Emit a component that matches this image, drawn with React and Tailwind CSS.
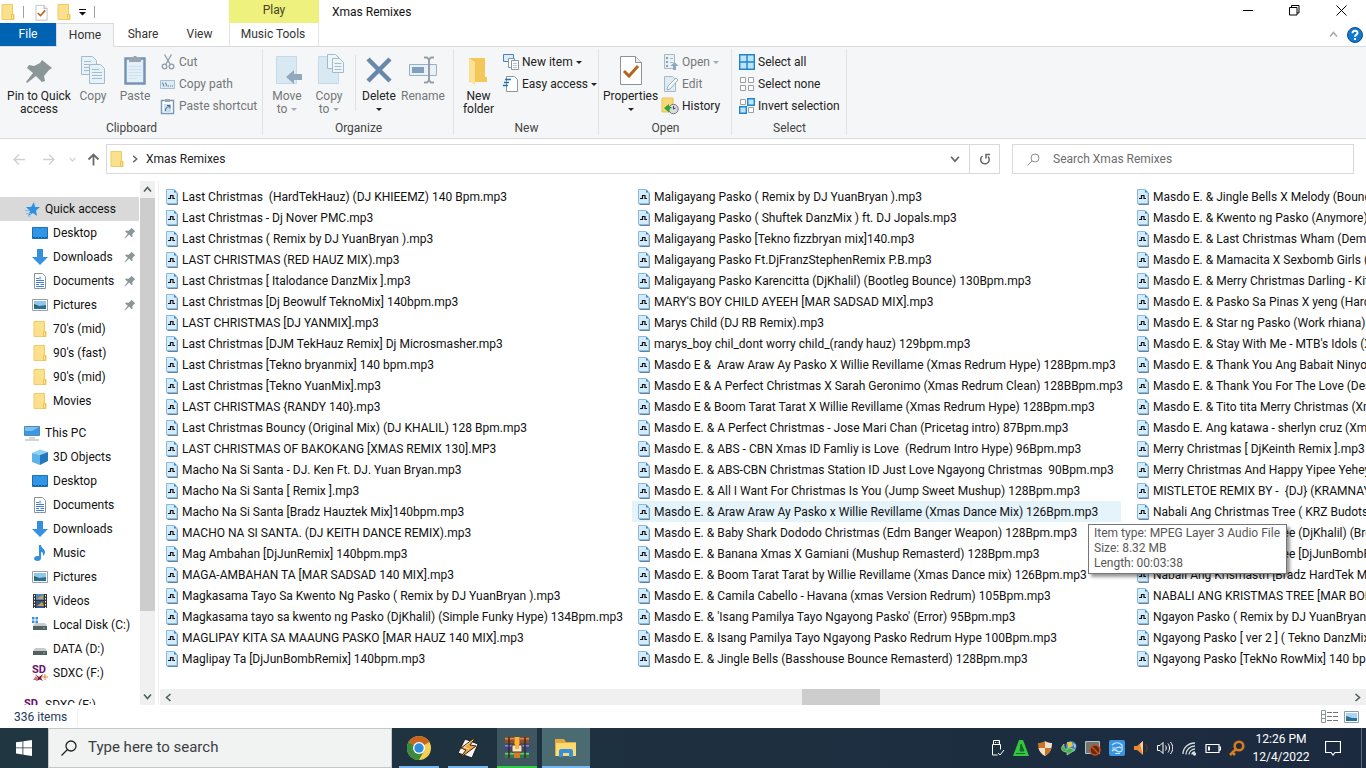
import React from 'react';

const COLUMN_ONE = [
  'Last Christmas  (HardTekHauz) (DJ KHIEEMZ) 140 Bpm.mp3',
  'Last Christmas - Dj Nover PMC.mp3',
  'Last Christmas ( Remix by DJ YuanBryan ).mp3',
  'LAST CHRISTMAS (RED HAUZ MIX).mp3',
  'Last Christmas [ Italodance DanzMix ].mp3',
  'Last Christmas [Dj Beowulf TeknoMix] 140bpm.mp3',
  'LAST CHRISTMAS [DJ YANMIX].mp3',
  'Last Christmas [DJM TekHauz Remix] Dj Microsmasher.mp3',
  'Last Christmas [Tekno bryanmix] 140 bpm.mp3',
  'Last Christmas [Tekno YuanMix].mp3',
  'LAST CHRISTMAS {RANDY 140}.mp3',
  'Last Christmas Bouncy (Original Mix) (DJ KHALIL) 128 Bpm.mp3',
  'LAST CHRISTMAS OF BAKOKANG [XMAS REMIX 130].MP3',
  'Macho Na Si Santa - DJ. Ken Ft. DJ. Yuan Bryan.mp3',
  'Macho Na Si Santa [ Remix ].mp3',
  'Macho Na Si Santa [Bradz Hauztek Mix]140bpm.mp3',
  'MACHO NA SI SANTA. (DJ KEITH DANCE REMIX).mp3',
  'Mag Ambahan [DjJunRemix] 140bpm.mp3',
  'MAGA-AMBAHAN TA [MAR SADSAD 140 MIX].mp3',
  'Magkasama Tayo Sa Kwento Ng Pasko ( Remix by DJ YuanBryan ).mp3',
  'Magkasama tayo sa kwento ng Pasko (DjKhalil) (Simple Funky Hype) 134Bpm.mp3',
  'MAGLIPAY KITA SA MAAUNG PASKO [MAR HAUZ 140 MIX].mp3',
  'Maglipay Ta [DjJunBombRemix] 140bpm.mp3',
];

const COLUMN_TWO = [
  'Maligayang Pasko ( Remix by DJ YuanBryan ).mp3',
  'Maligayang Pasko ( Shuftek DanzMix ) ft. DJ Jopals.mp3',
  'Maligayang Pasko [Tekno fizzbryan mix]140.mp3',
  'Maligayang Pasko Ft.DjFranzStephenRemix P.B.mp3',
  'Maligayang Pasko Karencitta (DjKhalil) (Bootleg Bounce) 130Bpm.mp3',
  "MARY'S BOY CHILD AYEEH [MAR SADSAD MIX].mp3",
  'Marys Child (DJ RB Remix).mp3',
  'marys_boy chil_dont worry child_(randy hauz) 129bpm.mp3',
  'Masdo E &  Araw Araw Ay Pasko X Willie Revillame (Xmas Redrum Hype) 128Bpm.mp3',
  'Masdo E & A Perfect Christmas X Sarah Geronimo (Xmas Redrum Clean) 128BBpm.mp3',
  'Masdo E & Boom Tarat Tarat X Willie Revillame (Xmas Redrum Hype) 128Bpm.mp3',
  'Masdo E. & A Perfect Christmas - Jose Mari Chan (Pricetag intro) 87Bpm.mp3',
  'Masdo E. & ABS - CBN Xmas ID Famliy is Love  (Redrum Intro Hype) 96Bpm.mp3',
  'Masdo E. & ABS-CBN Christmas Station ID Just Love Ngayong Christmas  90Bpm.mp3',
  'Masdo E. & All I Want For Christmas Is You (Jump Sweet Mushup) 128Bpm.mp3',
  'Masdo E. & Araw Araw Ay Pasko x Willie Revillame (Xmas Dance Mix) 126Bpm.mp3',
  'Masdo E. & Baby Shark Dododo Christmas (Edm Banger Weapon) 128Bpm.mp3',
  'Masdo E. & Banana Xmas X Gamiani (Mushup Remasterd) 128Bpm.mp3',
  'Masdo E. & Boom Tarat Tarat by Willie Revillame (Xmas Dance mix) 126Bpm.mp3',
  'Masdo E. & Camila Cabello - Havana (xmas Version Redrum) 105Bpm.mp3',
  "Masdo E. & 'Isang Pamilya Tayo Ngayong Pasko' (Error) 95Bpm.mp3",
  'Masdo E. & Isang Pamilya Tayo Ngayong Pasko Redrum Hype 100Bpm.mp3',
  'Masdo E. & Jingle Bells (Basshouse Bounce Remasterd) 128Bpm.mp3',
];

const COLUMN_THREE = [
  'Masdo E. & Jingle Bells X Melody (Bounce Mix) 128Bpm.mp3',
  'Masdo E. & Kwento ng Pasko (Anymore) 128Bpm.mp3',
  'Masdo E. & Last Christmas Wham (Dem Remix) 128Bpm.mp3',
  'Masdo E. & Mamacita X Sexbomb Girls (Mix) 128Bpm.mp3',
  'Masdo E. & Merry Christmas Darling - Kit (Mix) 128Bpm.mp3',
  'Masdo E. & Pasko Sa Pinas X yeng (Hard Mix) 128Bpm.mp3',
  'Masdo E. & Star ng Pasko (Work rhiana) 128Bpm.mp3',
  "Masdo E. & Stay With Me - MTB's Idols (Xmas) 128Bpm.mp3",
  'Masdo E. & Thank You Ang Babait Ninyo 128Bpm.mp3',
  'Masdo E. & Thank You For The Love (Desk Mix) 128Bpm.mp3',
  'Masdo E. & Tito tita Merry Christmas (Xmas Mix) 128Bpm.mp3',
  'Masdo E. Ang katawa - sherlyn cruz (Xmas Mix) 128Bpm.mp3',
  'Merry Christmas [ DjKeinth Remix ].mp3',
  'Merry Christmas And Happy Yipee Yehey 128Bpm.mp3',
  'MISTLETOE REMIX BY -  {DJ} (KRAMNAYR).mp3',
  'Nabali Ang Christmas Tree ( KRZ Budots Remix ).mp3',
  'Nabali Ang Christmas Tree (DjKhalil) (Break Mix).mp3',
  'Nabali Ang Christmas Tree [DjJunBombRemix].mp3',
  'Nabali Ang Krismastri [Bradz HardTek Mix].mp3',
  'NABALI ANG KRISTMAS TREE [MAR BOMB MIX].mp3',
  'Ngayon Pasko ( Remix by DJ YuanBryan ).mp3',
  'Ngayong Pasko [ ver 2 ] ( Tekno DanzMix ).mp3',
  'Ngayong Pasko [TekNo RowMix] 140 bpm.mp3',
];

const HOVERED = COLUMN_TWO[15];

/* ---------- small shared icons ---------- */

function Folder() {
  return (
    <svg className="h-4 w-4 shrink-0" viewBox="0 0 16 16">
      <path d="M2 .5h10.500v10h1.500v5H2z" fill="#fbe08d" stroke="#f0cb63" />
      <path d="M11.500 10.500h2v5h-2z" fill="#ffe9a2" stroke="#eec04c" />
    </svg>
  );
}

function Caret({ muted }) {
  return (
    <svg className="h-[3px] w-1.5 shrink-0" viewBox="0 0 6 3">
      <path d="M0 0h6L3 3z" fill={muted ? '#a5a9ad' : '#222'} />
    </svg>
  );
}

function PinMark() {
  return (
    <svg className="h-3 w-3 shrink-0" viewBox="0 0 32 32">
      <path d="M20 2l10 9-3 2-5 6 1 6-3 2-6-7L3 30l-2-1 9-11-7-6 3-3 6 1 6-5z" fill="#8c9699" />
    </svg>
  );
}

function Chevron({ dir, color = '#505f5f', size = 'h-[9px] w-[9px]' }) {
  const d = {
    up: 'M1 6.500l3.500-4 3.500 4',
    down: 'M1 2.500l3.500 4 3.500-4',
    left: 'M6.500 1l-4 3.500 4 3.500',
    right: 'M2.500 1l4 3.500-4 3.500',
  }[dir];
  return (
    <svg className={`${size} shrink-0`} viewBox="0 0 9 9">
      <path d={d} fill="none" stroke={color} strokeWidth="1.600" />
    </svg>
  );
}

function CheckSheet({ size }) {
  return (
    <svg className={`${size} shrink-0`} viewBox="0 0 32 32">
      <path d="M5.500 2.500h15l6 6v22h-21z" fill="#fff" stroke="#8e9296" />
      <path d="M20.500 2.500v6h6" fill="#e9ebec" stroke="#8e9296" />
      <path d="M9 17l5 5 9-10" fill="none" stroke="#b8651b" strokeWidth="3" />
    </svg>
  );
}

function Mp3Icon() {
  return (
    <svg className="h-4 w-3 shrink-0" viewBox="0 0 12 16">
      <path d="M1.500 15.500h10V4" fill="none" stroke="#6b7f93" />
      <path d="M.5.500h7.500l3 3v11H.5z" fill="#d3ebfa" stroke="#86bbe0" />
      <path d="M8 .5l3 3H8z" fill="#2f86cf" />
      <path d="M2 9.500h2.500v-3h2.500v3h2" fill="none" stroke="#111" strokeWidth="1.200" />
    </svg>
  );
}

/* ---------- ribbon icons ---------- */

const page = (x, y, w, h) => `M${x} ${y}h${w - 4}l4 4v${h - 4}h-${w}z`;

function RibbonIcon({ name }) {
  const art = {
    pin: (
      <path d="M19 6l10 8-3 2-5 6 1 5-3 1-6-6-9 7-1-1 7-9-6-5 2-3 5 1 6-3z" fill="#8b9696" />
    ),
    copy: (
      <g fill="#e6f1f8" stroke="#a3bccd">
        <path d={page(4.500, 2.500, 15, 18)} />
        <path d="M7 7.500h7M7 10.500h10M7 13.500h5M7 16.500h5" />
        <path d={page(12.500, 10.500, 15, 19)} />
        <path d="M15 15.500h7M15 18.500h10M15 21.500h10M15 24.500h10" />
      </g>
    ),
    paste: (
      <g>
        <path d="M6.500 4.500h19v25h-19z" fill="#e3f0fa" stroke="#7695b4" strokeWidth="2.500" />
        <path d="M9.500 12.500h13M9.500 15.500h13M9.500 18.500h13M9.500 21.500h13M9.500 24.500h8" stroke="#cfe1ee" />
        <path d="M10 4h3l2-2h2l2 2h3v4H10z" fill="#9aa5ac" />
      </g>
    ),
    moveTo: (
      <g>
        <path d="M5.500 2.500h20v27h-20z" fill="#d9e9f4" stroke="#c5d9e7" />
        <path d="M15 23l8-7v4h8v6h-8v4z" fill="#91a9ba" />
      </g>
    ),
    copyTo: (
      <g>
        <path d="M5.500 2.500h20v27h-20z" fill="#d9e9f4" stroke="#c5d9e7" />
        <g fill="#eef5f9" stroke="#a3bccd">
          <path d={page(14.500, 0.500, 12, 14)} />
          <path d={page(19.500, 4.500, 11, 14)} />
          <path d="M21.500 9.500h7M21.500 12.500h7M21.500 15.500h7" />
        </g>
      </g>
    ),
    del: <path d="M5 5l22 22M27 5L5 27" stroke="#6787ab" strokeWidth="4.500" />,
    rename: (
      <g>
        <path d="M2.500 10.500h27v11h-27z" fill="#e9f1f7" stroke="#93b2c9" />
        <path d="M5 13h12v6H5z" fill="#7f9fbb" />
        <path d="M17 3.500h3l2 2 2-2h3M22 5v22M17 28.500h3l2-2 2 2h3" fill="none" stroke="#95a0a8" strokeWidth="2" />
      </g>
    ),
    folder: (
      <g>
        <path d="M6 4h16v19h2v5H6z" fill="#f4c75b" />
        <path d="M6 4l6 4v23l-6-4z" fill="#fde194" />
      </g>
    ),
  }[name];
  return (
    <svg className="h-8 w-8" viewBox="0 0 32 32">
      {art}
    </svg>
  );
}

function SmallIcon({ name }) {
  const art = {
    cut: (
      <g fill="none" stroke="#8d9da8" strokeWidth="1.300">
        <path d="M4.500.5l5.500 9.500M11.500.5L6 10" />
        <circle cx="4.500" cy="12.500" r="2.300" />
        <circle cx="11.500" cy="12.500" r="2.300" />
      </g>
    ),
    copyPath: (
      <g>
        <path d="M.5 4.500h14v8H.5z" fill="#dcebf5" stroke="#a7bfd0" />
        <path d="M2.500 6.500l1.500 4M5.500 6.500l1.500 4M8 10h1M10 10h1M12 10h1" stroke="#5c7387" fill="none" />
      </g>
    ),
    shortcut: (
      <g>
        <path d="M1.500 2.500h12v13h-12z" fill="#fff" stroke="#7c9cb8" strokeWidth="1.500" />
        <path d="M5 1h5v3H5z" fill="#9aa5ac" />
        <path d="M4 6h7v8H4z" fill="#c8dded" />
        <path d="M5.500 13c0-3 1-4 4-4.500M7 7.500h3v3" stroke="#41668a" fill="none" />
      </g>
    ),
    newItem: (
      <g>
        <path d="M.5.500h10v7H.5z" fill="#dcebf5" stroke="#4b82b3" />
        <path d="M5.500 4.500h6v9h-6z" fill="#fff" stroke="#8b979f" />
        <path d="M8.500 6.500h7v9h-7z" fill="#fff" stroke="#8b979f" />
        <path d="M10 9.500h4M10 11.500h4M10 13.500h4" stroke="#b4c5d1" />
      </g>
    ),
    easy: (
      <g>
        <path d="M3.500.500h8l3 3v12h-11z" fill="#fff" stroke="#8b979f" />
        <path d="M2 3.500h6M1 6.500h5M0 9.500h5" stroke="#1d73b8" strokeWidth="1.400" />
      </g>
    ),
    open: (
      <g>
        <path d="M1.500.5h10v14h-10z" fill="#e9f1f6" stroke="#a6b9c6" />
        <path d="M3 3h2v2H3zM3 7h2v2H3zM3 11h2v2H3z" fill="#859eb0" />
        <path d="M7 4.500h3M7 8.500h3" stroke="#a6b9c6" />
        <path d="M11.500 8l4 4h-2.500v4h-3v-4H7.500z" fill="#8fa7b9" />
      </g>
    ),
    edit: (
      <g>
        <path d="M1.500.5h8l3 3v12h-11z" fill="#dfebf3" stroke="#a6b9c6" />
        <path d="M4 14l1-4 8-8 2 2-8 9z" fill="#f2f7fa" stroke="#9db1bf" />
      </g>
    ),
    history: (
      <g>
        <path d="M-1 0h11v14H-1z" fill="#f8d978" stroke="#edc453" />
        <circle cx="10.500" cy="11" r="4.700" fill="#d9dde0" stroke="#6f7a80" />
        <path d="M10.500 8v3l2-1" stroke="#444" fill="none" />
        <path d="M1 10l5-4v2.500c2 0 3 1 3 2-2-1-3 0-3 4z" fill="#2fa52f" />
      </g>
    ),
    all: (
      <g fill="#bfe3fa" stroke="#1f85cf" strokeWidth="1.400">
        <path d="M.7.700h7.300v7.300H.7zM8 .700h7.300v7.300H8zM.7 8H8v7.300H.7zM8 8h7.300v7.300H8z" />
      </g>
    ),
    none: (
      <g fill="#fff" stroke="#9aa0a4">
        <path d="M1.500 1.500h5v5h-5zM9.500 1.500h5v5h-5zM1.500 9.500h5v5h-5zM9.500 9.500h5v5h-5z" />
      </g>
    ),
    invert: (
      <g>
        <path d="M1.500 1.500h5v5h-5zM9.500 9.500h5v5h-5z" fill="#fff" stroke="#9aa0a4" />
        <path d="M8.700.700h6.600v6.600H8.700zM.7 8.700h6.600v6.600H.7z" fill="#bfe3fa" stroke="#1f85cf" strokeWidth="1.400" />
      </g>
    ),
  }[name];
  return (
    <svg className="h-4 w-4 shrink-0 overflow-visible" viewBox="0 0 16 16">
      {art}
    </svg>
  );
}

/* ---------- title bar and tabs ---------- */

function TitleBar() {
  return (
    <header className="flex h-[23px]">
      <div className="flex w-[229px] items-center pt-px">
        <Folder />
        <span className="ml-[7px] h-3 w-px bg-gray-400" />
        <button className="ml-[9px]" aria-label="Properties">
          <CheckSheet size="h-[17px] w-[17px]" />
        </button>
        <button className="ml-1.5" aria-label="New folder">
          <Folder />
        </button>
        <button className="ml-[7px]" aria-label="Customize toolbar">
          <svg className="h-[7px] w-[7px]" viewBox="0 0 7 7">
            <path d="M0 0h7v1H0zM0 3h7L3.500 6.500z" fill="#111" />
          </svg>
        </button>
        <span className="ml-2 h-3 w-px bg-gray-400" />
      </div>
      <div className="w-[90px] bg-[#eff17f] text-center leading-[21px] text-[#444422]">Play</div>
      <h1 className="pl-[13px] leading-[24px]">Xmas Remixes</h1>
      <div className="ml-auto flex items-center pb-0.5">
        <button className="flex w-[45px] justify-center" aria-label="Minimize">
          <svg className="h-[11px] w-[11px]" viewBox="0 0 11 11">
            <path d="M0 5.500h10" stroke="#000" />
          </svg>
        </button>
        <button className="flex w-[46px] justify-center" aria-label="Restore">
          <svg className="h-[11px] w-[11px]" viewBox="0 0 11 11">
            <path d="M.5 2.500h7.500v7.500H.5zM2.500 2.500V.5H10v7.500H8" fill="none" stroke="#000" />
          </svg>
        </button>
        <button className="flex w-[49px] justify-center" aria-label="Close">
          <svg className="h-[11px] w-[11px]" viewBox="0 0 11 11">
            <path d="M.5.500l10 10M10.500.500l-10 10" stroke="#000" />
          </svg>
        </button>
      </div>
    </header>
  );
}

function Tabs() {
  return (
    <nav className="flex h-6 border-b border-[#dadbdc] leading-[23px] text-[#333]">
      <button className="w-14 bg-[#0063b1] text-white">File</button>
      <button className="-mb-px w-[58px] border-x border-t border-[#dadbdc] bg-[#f5f6f7]">Home</button>
      <button className="w-[58px]">Share</button>
      <button className="w-[57px] pr-0.5">View</button>
      <button className="w-[90px] border-x border-[#e4e4e4] pr-0.5">Music Tools</button>
      <div className="ml-auto flex items-center gap-[9px] pr-[3px]">
        <button aria-label="Minimize the ribbon">
          <Chevron dir="up" color="#a9a9a9" />
        </button>
        <button aria-label="Help">
          <svg className="h-4 w-4" viewBox="0 0 16 16">
            <circle cx="8" cy="8" r="7.500" fill="#1177cf" stroke="#0b4f96" />
            <path d="M5.500 6.200C5.500 3 10.500 3 10.500 6c0 1.800-2.500 1.700-2.500 3.800M8 11v2" fill="none" stroke="#fff" strokeWidth="2" />
          </svg>
        </button>
      </div>
    </nav>
  );
}

/* ---------- ribbon ---------- */

function BigButton({ icon, lines, width, muted, caret }) {
  return (
    <button className={`${width} flex shrink-0 flex-col items-center pt-[7px] leading-[13px] ${muted ? 'text-[#737779]' : 'text-[#222]'}`}>
      {icon === 'sheet' ? <CheckSheet size="h-8 w-8" /> : <RibbonIcon name={icon} />}
      <span className="mt-1 whitespace-nowrap">{lines[0]}</span>
      <span className="flex min-h-3 items-center gap-1">
        {lines[1]}
        {caret && <Caret muted={muted} />}
      </span>
    </button>
  );
}

function SmallButton({ icon, label, muted, caret }) {
  return (
    <button className={`flex h-[22px] items-center gap-[3px] whitespace-nowrap ${muted ? 'text-[#737779]' : 'text-[#222]'}`}>
      <SmallIcon name={icon} />
      {label}
      {caret && <Caret muted={muted} />}
    </button>
  );
}

function Group({ title, width, children }) {
  return (
    <section className={`${width} relative flex shrink-0 flex-col`}>
      <div className="flex h-[74px]">{children}</div>
      <h2 className="text-center leading-[15px] text-[#444]">{title}</h2>
      <span className="absolute top-[2px] right-0 h-[86px] w-px bg-[#e1e2e3]" />
    </section>
  );
}

function Ribbon() {
  return (
    <div className="flex h-[92px] border-b border-[#dadbdc] bg-[#f5f6f7]">
      <Group title="Clipboard" width="w-[263px]">
        <BigButton icon="pin" lines={['Pin to Quick', 'access']} width="w-[78px]" />
        <BigButton icon="copy" lines={['Copy']} width="w-[30px]" muted />
        <BigButton icon="paste" lines={['Paste']} width="w-[54px]" muted />
        <div className="-ml-0.5 flex flex-col pt-1">
          <SmallButton icon="cut" label="Cut" muted />
          <SmallButton icon="copyPath" label="Copy path" muted />
          <SmallButton icon="shortcut" label="Paste shortcut" muted />
        </div>
      </Group>
      <Group title="Organize" width="w-[191px]">
        <BigButton icon="moveTo" lines={['Move', 'to']} width="w-[48px]" muted caret />
        <BigButton icon="copyTo" lines={['Copy', 'to']} width="w-[36px]" muted caret />
        <span className="mt-2 ml-2 h-14 w-px bg-[#dfe0e1]" />
        <BigButton icon="del" lines={['Delete']} width="w-[46px]" caret />
        <BigButton icon="rename" lines={['Rename']} width="w-[42px]" muted />
      </Group>
      <Group title="New" width="w-[145px]">
        <BigButton icon="folder" lines={['New', 'folder']} width="w-[49px]" />
        <div className="flex flex-col pt-1">
          <SmallButton icon="newItem" label="New item" caret />
          <SmallButton icon="easy" label="Easy access" caret />
        </div>
      </Group>
      <Group title="Open" width="w-[133px]">
        <BigButton icon="sheet" lines={['Properties']} width="w-[63px]" caret />
        <div className="flex flex-col pt-1 pl-px">
          <SmallButton icon="open" label="Open" muted caret />
          <SmallButton icon="edit" label="Edit" muted />
          <SmallButton icon="history" label="History" />
        </div>
      </Group>
      <Group title="Select" width="w-[115px]">
        <div className="flex flex-col pt-1 pl-[7px]">
          <SmallButton icon="all" label="Select all" />
          <SmallButton icon="none" label="Select none" />
          <SmallButton icon="invert" label="Invert selection" />
        </div>
      </Group>
    </div>
  );
}

/* ---------- address bar ---------- */

function Arrow({ dir, color }) {
  const d = {
    left: 'M12 6.500H1M6 1.500l-5 5 5 5',
    right: 'M1 6.500h11M7 1.500l5 5-5 5',
    up: 'M6.500 12.500V1.500M1.500 6.500l5-5 5 5',
  }[dir];
  return (
    <svg className="h-[13px] w-[13px]" viewBox="0 0 13 13">
      <path d={d} fill="none" stroke={color} strokeWidth={dir === 'up' ? 1.8 : 1.3} />
    </svg>
  );
}

function AddressBar() {
  return (
    <div className="flex h-[42px] items-center pr-3 pb-0.5">
      <div className="flex w-[106px] items-center pl-[13px]">
        <button aria-label="Back"><Arrow dir="left" color="#cfcfcf" /></button>
        <button className="ml-4" aria-label="Forward"><Arrow dir="right" color="#cfcfcf" /></button>
        <button className="ml-3.5" aria-label="Recent locations">
          <Chevron dir="down" color="#cfcfcf" size="h-[7px] w-[7px]" />
        </button>
        <button className="ml-[11px]" aria-label="Up"><Arrow dir="up" color="#6a6a6a" /></button>
      </div>
      <div className="flex h-[30px] flex-1 items-center border border-[#d9d9d9] pl-0.5">
        <Folder />
        <span className="ml-1.5"><Chevron dir="right" color="#666" size="h-2 w-2" /></span>
        <a href="#folder" className="ml-[7px] text-[#222]">Xmas Remixes</a>
        <button className="mr-[9px] ml-auto" aria-label="Previous locations">
          <Chevron dir="down" color="#666" size="h-2.5 w-2.5" />
        </button>
        <button className="flex h-full w-[30px] items-center justify-center border-l border-[#d9d9d9]" aria-label="Refresh">
          <svg className="h-3 w-3" viewBox="0 0 12 12">
            <path d="M8.500 3A4.300 4.300 0 1 1 3 3.500M1 1.500h4v4" fill="none" stroke="#666" strokeWidth="1.500" transform="matrix(-1 0 0 1 12 0)" />
          </svg>
        </button>
      </div>
      <label className="ml-3 flex h-[30px] w-[342px] items-center border border-[#d9d9d9] pl-3.5">
        <svg className="h-[13px] w-[13px]" viewBox="0 0 13 13" aria-label="Search">
          <circle cx="8" cy="5" r="4" fill="none" stroke="#8b8f8b" />
          <path d="M5 8L.5 12.500" stroke="#8b8f8b" />
        </svg>
        <input type="text" aria-label="Search Xmas Remixes" placeholder="Search Xmas Remixes" className="ml-[13px] flex-1 outline-none placeholder:text-[#6d6d6d]" />
      </label>
    </div>
  );
}

/* ---------- navigation pane ---------- */

function PlaceIcon({ name }) {
  if (name === 'folder') return <Folder />;
  const art = {
    star: (
      <g>
        <path d="M10 1l1 5h5l-4 3.500 1 5.500-4-3-5 3 2-5-4-4h5z" fill="#2f8fe0" />
        <path d="M2 12.500h5M1 9.500h4M4 15h3" stroke="#7cb9ec" />
      </g>
    ),
    desktop: (
      <g>
        <path d="M.5 2.500h15v11H.5z" fill="#2f95e4" stroke="#1b6fb4" />
        <path d="M1 12.500h14" stroke="#135a98" strokeDasharray="2 1" />
      </g>
    ),
    downloads: <path d="M5 0h6v8h5l-8 8-8-8h5z" fill="#3590df" />,
    documents: (
      <g>
        <path d="M2.500.5h8l3 3v12h-11z" fill="#fff" stroke="#8a9399" />
        <path d="M4 5.500h3M4 7.500h8M4 9.500h8M4 11.500h3M8.500 11.500H12M4 13.500h8M8 3.500v3" stroke="#3e84c4" />
      </g>
    ),
    pictures: (
      <g>
        <path d="M.5 2.500h15v11H.5z" fill="#fff" stroke="#9aa2a6" />
        <path d="M2 4h12v8H2z" fill="#8fc8ee" />
        <path d="M2 8l5 1 7-1v4H2z" fill="#2a6f93" />
        <path d="M2 7l5 2H2z" fill="#2b5d4c" />
      </g>
    ),
    pc: (
      <g>
        <path d="M.5 1.500h15v9H.5z" fill="#3a97e2" stroke="#4d88b8" />
        <path d="M1 2h14L8 6H1z" fill="#7cc0f2" />
        <path d="M5 13h6M1 15h14" stroke="#a5adb2" strokeWidth="1.200" />
      </g>
    ),
    cube: (
      <g>
        <path d="M0 4l8-3.500L16 3l-8 3z" fill="#8fd2f3" />
        <path d="M0 4l8 2v10l-8-3z" fill="#5bb3e6" />
        <path d="M16 3v9l-8 4V6z" fill="#2277bd" />
      </g>
    ),
    music: (
      <path d="M7 0h2c0 3 4 4 4 7 0 2-1 3-2 4 .5-3-.5-4-2-4v6c0 2-1.500 3-3.500 3S2 15 2 13.500 4 10.500 7 11z" fill="#2f8fe0" />
    ),
    videos: (
      <g>
        <path d="M1 1h14v14H1z" fill="#333" />
        <path d="M4 1h8v6H4z" fill="#4d86bd" />
        <path d="M4 8h8v7H4z" fill="#315a8c" />
        <path d="M6 5l5-3v4H6zM5 13l5-4 2 4z" fill="#d99a3c" />
        <path d="M2.500 2v13M13.500 2v13" stroke="#fff" strokeDasharray="1.500 1.500" />
      </g>
    ),
    disk: (
      <g>
        <path d="M0 0h2.500v2.500H0zM3.500 0H6v2.500H3.500zM0 3.500h2.500V6H0zM3.500 3.500H6V6H3.500z" fill="#3590df" />
        <path d="M3 6h10l2 3H1z" fill="#c6cccc" />
        <path d="M1 9h14v4H1z" fill="#536062" />
        <path d="M11 11h2" stroke="#49e07a" />
      </g>
    ),
    data: (
      <g>
        <path d="M3 7h10l2 3H1z" fill="#c6cccc" />
        <path d="M1 10h14v4H1z" fill="#536062" />
        <path d="M11 12h2" stroke="#49e07a" />
      </g>
    ),
    sdStar: (
      <g>
        <text x="0" y="8" fontSize="11" fontWeight="700" fill="#6b0f6b">SD</text>
        <path d="M3 9l4 3 4-3-2 4 2 3-3-1.500L4 16l2-3z" fill="#7a1040" />
        <path d="M13 9v6M10 12h6" stroke="#d98a2b" />
        <path d="M1 15l3-4 2 4z" fill="#c9756a" />
      </g>
    ),
    sd: <text x="0" y="10" fontSize="11" fontWeight="700" fill="#6b0f6b">SD</text>,
  }[name];
  return (
    <svg className="h-4 w-4 shrink-0 overflow-visible" viewBox="0 0 16 16">
      {art}
    </svg>
  );
}

const QUICK = [
  ['desktop', 'Desktop', true],
  ['downloads', 'Downloads', true],
  ['documents', 'Documents', true],
  ['pictures', 'Pictures', true],
  ['folder', "70's (mid)"],
  ['folder', "90's (fast)"],
  ['folder', "90's (mid)"],
  ['folder', 'Movies'],
];

const THIS_PC = [
  ['cube', '3D Objects'],
  ['desktop', 'Desktop'],
  ['documents', 'Documents'],
  ['downloads', 'Downloads'],
  ['music', 'Music'],
  ['pictures', 'Pictures'],
  ['videos', 'Videos'],
  ['disk', 'Local Disk (C:)'],
  ['data', 'DATA (D:)'],
  ['sdStar', 'SDXC (F:)'],
];

function Place({ icon, label, pinned, root, active }) {
  return (
    <li>
      <a href="#place" className={`flex h-6 items-center gap-[5px] pr-[3px] whitespace-nowrap ${root ? 'pl-6' : 'pl-8'} ${active ? 'bg-[#d9d9d9]' : ''}`}>
        <PlaceIcon name={icon} />
        {label}
        {pinned && <span className="ml-auto"><PinMark /></span>}
      </a>
    </li>
  );
}

function Sidebar() {
  return (
    <aside className="flex w-[159px] shrink-0 border-r border-[#f0f0f0]">
      <div className="w-[139px] overflow-hidden pt-4">
        <ul>
          <Place icon="star" label="Quick access" root active />
          {QUICK.map(([icon, label, pinned], i) => (
            <Place key={i} icon={icon} label={label} pinned={pinned} />
          ))}
        </ul>
        <ul className="mt-2">
          <Place icon="pc" label="This PC" root />
          {THIS_PC.map(([icon, label], i) => (
            <Place key={i} icon={icon} label={label} />
          ))}
        </ul>
        <ul className="mt-2">
          <Place icon="sd" label="SDXC (F:)" root />
        </ul>
      </div>
      <div className="ml-px flex w-[15px] flex-col items-center bg-[#f0f0f0]">
        <span className="flex h-[17px] items-center"><Chevron dir="up" /></span>
        <span className="h-[413px] w-full bg-[#cdcdcd]" />
        <span className="mt-auto flex h-[17px] items-center"><Chevron dir="down" /></span>
      </div>
    </aside>
  );
}

/* ---------- file list ---------- */

function FileColumn({ files, width }) {
  return (
    <ul className={`${width} shrink-0 pr-2.5`}>
      {files.map((name) => (
        <li
          key={name}
          className={`flex h-[21px] items-center gap-1 pl-1.5 whitespace-pre ${name === HOVERED ? 'bg-[#e5f3fb]' : ''}`}
        >
          <Mp3Icon />
          {name}
        </li>
      ))}
    </ul>
  );
}

function FilePane() {
  return (
    <main className="relative flex min-w-0 flex-1 flex-col pl-px">
      <div className="flex flex-1 overflow-hidden pt-[5px]">
        <FileColumn files={COLUMN_ONE} width="w-[472px]" />
        <FileColumn files={COLUMN_TWO} width="w-[499px]" />
        <FileColumn files={COLUMN_THREE} width="w-[472px]" />
      </div>
      <div className="flex h-4 items-center bg-[#f0f0f0] px-1">
        <Chevron dir="left" />
        <div className="flex h-full flex-1 justify-end">
          <span className="mr-[473px] h-full w-[78px] bg-[#cdcdcd]" />
        </div>
        <Chevron dir="right" />
      </div>
      <div
        role="tooltip"
        className="absolute top-[343px] left-[929px] border border-[#767676] bg-white pt-px pr-1.5 pb-0.5 pl-[5px] leading-[15px] whitespace-nowrap text-[#575757] shadow-[3px_3px_3px_rgba(0,0,0,0.4)]"
      >
        <p>Item type: MPEG Layer 3 Audio File</p>
        <p>Size: 8.32 MB</p>
        <p>Length: 00:03:38</p>
      </div>
    </main>
  );
}

function StatusBar() {
  return (
    <footer className="flex h-[23px] items-center gap-[6px] pr-[7px] pl-3.5 text-[#1e395b]">
      <span>336 items</span>
      <span className="ml-1 h-4 w-px bg-[#f0f0f0]" />
      <button className="ml-auto" aria-label="Details view">
        <svg className="h-[13px] w-[17px]" viewBox="0 0 17 13">
          <path d="M.5.500h4v12h-4z" fill="#fff" stroke="#8c9494" />
          <path d="M1 4.500h3M1 8.500h3" stroke="#8c9494" />
          <path d="M6 2.500h5M6 6.500h5M6 10.500h5M12 2.500h5M12 6.500h5M12 10.500h5" stroke="#6d7575" />
        </svg>
      </button>
      <button aria-label="Large icons view">
        <svg className="h-3 w-[15px]" viewBox="0 0 15 12">
          <path d="M.5.500h14v11H.5z" fill="#fff" stroke="#8c9ea8" />
          <path d="M2 2h11v8H2z" fill="#a6d5f5" />
          <path d="M2 5l6 2 5 0v3H2z" fill="#2d6f95" />
        </svg>
      </button>
    </footer>
  );
}

/* ---------- taskbar ---------- */

function Chrome() {
  return (
    <svg className="h-6 w-6" viewBox="0 0 24 24">
      <circle cx="12" cy="12" r="12" fill="#f3cf56" />
      <path d="M12 12L1.600 6A12 12 0 0 1 22.400 6z" fill="#c8651f" />
      <path d="M12 12L1.600 6A12 12 0 0 0 12 24l5-9z" fill="#3c8a3e" />
      <circle cx="12" cy="12" r="6" fill="#fff" />
      <circle cx="12" cy="12" r="4.700" fill="#2f8be0" />
    </svg>
  );
}

function Winamp() {
  return (
    <svg className="h-6 w-6" viewBox="0 0 24 24">
      <path d="M9 3l13 5-6 14-14-5z" fill="#f4f4f4" stroke="#1b1b1b" />
      <path d="M20 1L5 12l5 2-6 8 16-12-6-1z" fill="#f0a545" stroke="#3a2410" />
      <path d="M17 4L8 11l5 2" fill="none" stroke="#fbdc9c" />
    </svg>
  );
}

function WinRar() {
  return (
    <svg className="h-6 w-6" viewBox="0 0 24 24">
      <path d="M0 1h24v6H0z" fill="#9c4a22" />
      <path d="M0 2h24v1.500H0z" fill="#d98a52" />
      <path d="M0 8h24v7H0z" fill="#3d4a8c" />
      <path d="M0 9h24v1.500H0z" fill="#7f8fd6" />
      <path d="M0 16h24v6H0z" fill="#2f7a4d" />
      <path d="M0 17h24v1.500H0z" fill="#6fc78e" />
      <path d="M4 1v21M20 1v21" stroke="#3b2a1c" strokeWidth="1.500" />
      <path d="M9 1h6v21H9z" fill="#d47a26" />
      <path d="M7 9h10v7H7z" fill="#efe6d2" stroke="#5c3a1a" />
      <path d="M10 1h4v12h-4z" fill="#f4b63d" />
    </svg>
  );
}

function ExplorerIcon() {
  return (
    <svg className="h-6 w-6" viewBox="0 0 24 24">
      <path d="M1 3h9l2 3h10v14H1z" fill="#e3a83e" />
      <path d="M2 7h20v13H2z" fill="#fbd973" />
      <path d="M5 21v-6c0-1 1-2 2-2h10c1 0 2 1 2 2v6h-4v-4H9v4z" fill="#3590df" />
    </svg>
  );
}

const APPS = [
  { name: 'Chrome', icon: <Chrome />, box: 'w-12', bar: 'w-10 bg-[#76b5f0]' },
  { name: 'Winamp', icon: <Winamp />, box: 'ml-px w-12', bar: 'w-10 bg-[#76b5f0]' },
  { name: 'WinRAR', icon: <WinRar />, box: 'ml-[5px] w-10 bg-[#3d5660]', bar: 'w-full bg-[#2ecc40]' },
  { name: 'File Explorer', icon: <ExplorerIcon />, box: 'ml-[5px] w-12 bg-[#4b6b72]', bar: 'w-full bg-[#76b5f0]' },
];

const TRAY = {
  usb: (
    <g fill="none" stroke="#fff">
      <path d="M4.500.500h6v4h-6zM3.500 4.500h8v5M3.500 4.500v10.500h5" />
      <path d="M6 2.500h1M8.500 2.500h1M9 13l2 2 4-5" />
    </g>
  ),
  green: (
    <g>
      <path d="M6 0h4l6 16H0z" fill="#35c63f" />
      <path d="M8 4l3 7H7zM3 13.500h9" fill="#17662a" stroke="#17662a" />
    </g>
  ),
  shield: (
    <g>
      <path d="M8 1C6 2.500 3 3 1 3c0 6 2 10 7 13z" fill="#c8732a" />
      <path d="M8 1c2 1.500 5 2 7 2 0 6-2 10-7 13z" fill="#f1e2cb" />
      <path d="M8 8h6.500c-.8 3.500-3 6-6.500 8z" fill="#c8732a" />
      <path d="M8 8H1.500c.8 3.500 3 6 6.500 8z" fill="#f1e2cb" />
    </g>
  ),
  idm: (
    <g>
      <circle cx="10" cy="6.500" r="5.500" fill="#3c7fc0" />
      <path d="M6 2l5 0 1 4-5 2z" fill="#e3c547" />
      <path d="M12 3l3 2-1 4z" fill="#9fd4f4" />
      <path d="M3 4c-4 4-3 8 3 8v3l8-5-7-3v2C4 10 3 8 3 4z" fill="#46b24c" stroke="#d8e4c8" strokeWidth=".6" />
    </g>
  ),
  blocked: (
    <g>
      <path d="M.5 1.500h14v12H.5z" fill="#6c7878" stroke="#b8c0c0" />
      <circle cx="10" cy="10" r="5" fill="#612a14" stroke="#c9511f" strokeWidth="1.500" />
      <path d="M7 7l6 6" stroke="#c9511f" strokeWidth="1.500" />
    </g>
  ),
  intel: (
    <g>
      <rect width="16" height="16" rx="2" fill="#3a95df" />
      <path d="M3 5c3-3 7-3 10 0v6M3 8h4c2 0 3-2 5 0M3 11c2-2 4-1 5 0s3 1 5 0M6 13.500h5" fill="none" stroke="#c9e6fb" strokeWidth="1.200" />
    </g>
  ),
  horn: (
    <g>
      <path d="M1 6h3l6-5v14l-6-5H1z" fill="#e98733" />
      <path d="M7 4l3-3v14z" fill="#f9cf9c" />
      <path d="M12.500 4c2 3 2 5 0 8" stroke="#7a3a1c" fill="none" />
    </g>
  ),
  volume: (
    <g fill="none" stroke="#fff">
      <path d="M.5 5.500H3l3-3v11l-3-3H.500zM8.500 5.500c1 1.500 1 3.500 0 5M11 3.500c2 3 2 6 0 9M13.500 2c3 4 3 8 0 12" />
    </g>
  ),
  wifi: (
    <g fill="none" stroke="#d7dde2" strokeWidth="1.300">
      <path d="M2 14C2 8 7 3 14 3M5 14.500C5 10 9 6 14 6M8 14.500c0-3 3-5.500 6-5.500M11 14.500c0-1.500 1.500-2.500 3-2.500" />
      <circle cx="13.500" cy="14" r="1" fill="#fff" />
    </g>
  ),
  battery: (
    <g>
      <path d="M1 4.500h13v8H1zM14 7h1.500v3H14" fill="none" stroke="#fff" strokeWidth="1.200" />
      <path d="M3 6.500h2v4H3z" fill="#fff" />
    </g>
  ),
  key: (
    <g fill="none" stroke="#d97a1c" strokeWidth="2.600">
      <circle cx="10" cy="6" r="4.300" />
      <path d="M7 9L1 15M3 12l3 3" />
    </g>
  ),
};

function Taskbar() {
  return (
    <div className="flex h-10 shrink-0 bg-linear-to-r from-[#203640] to-[#1c2a40] text-white">
      <button className="flex w-12 items-center justify-center" aria-label="Start">
        <svg className="h-4 w-4" viewBox="0 0 16 16">
          <path d="M0 2.300l6.500-.9v6.100H0zM7.300 1.300L16 0v7.500H7.300zM0 8.300h6.500v6.200L0 13.600zM7.300 8.300H16V16l-8.700-1.300z" fill="#fff" />
        </svg>
      </button>
      <label className="flex w-[344px] items-center border border-[#c4c7c8] bg-[#f1f2f2] pl-3 text-[#3a3f42]">
        <svg className="h-4 w-4" viewBox="0 0 16 16" aria-label="Search">
          <circle cx="10" cy="6" r="5" fill="none" stroke="#222" strokeWidth="1.300" />
          <path d="M6.500 9.500L.5 15.500" stroke="#222" strokeWidth="1.300" />
        </svg>
        <input type="text" aria-label="Type here to search" placeholder="Type here to search" className="ml-[11px] flex-1 text-[15px] outline-none placeholder:text-[#3a3f42]" />
      </label>
      <div className="ml-[3px] flex">
        {APPS.map((app) => (
          <button key={app.name} aria-label={app.name} className={`${app.box} flex flex-col items-center justify-between pt-2`}>
            {app.icon}
            <span className={`${app.bar} h-0.5`} />
          </button>
        ))}
      </div>
      <div className="ml-auto flex items-center">
        <div className="flex gap-2">
          {Object.entries(TRAY).map(([name, art]) => (
            <button key={name} aria-label={name}>
              <svg className="h-4 w-4" viewBox="0 0 16 16">{art}</svg>
            </button>
          ))}
        </div>
        <div className="w-[72px] text-center leading-[18px]">
          <p>12:26 PM</p>
          <p>12/4/2022</p>
        </div>
        <button className="flex w-8 justify-center" aria-label="Notifications">
          <svg className="h-4 w-4" viewBox="0 0 16 16">
            <path d="M.5 1.500h15v11H10l-2 2.500-2-2.500H.5z" fill="none" stroke="#fff" strokeWidth="1.200" />
          </svg>
        </button>
        <span className="ml-3 h-10 w-[5px] border-l border-[#5b6878]" />
      </div>
    </div>
  );
}

export default function App() {
  return (
    <div className="flex h-screen flex-col overflow-hidden bg-white font-['Roboto',sans-serif] text-xs text-[#111]">
      <TitleBar />
      <Tabs />
      <Ribbon />
      <AddressBar />
      <div className="flex min-h-0 flex-1">
        <Sidebar />
        <FilePane />
      </div>
      <StatusBar />
      <Taskbar />
    </div>
  );
}
